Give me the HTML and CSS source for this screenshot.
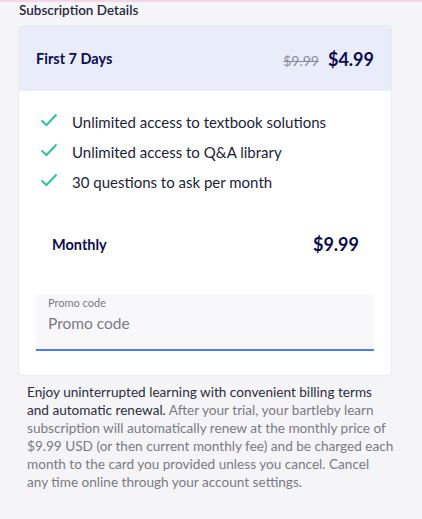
FILE: index.html
```html
<!DOCTYPE html>
<html>
<head>
<meta charset="utf-8">
<link rel="stylesheet" href="styles.css">
</head>
<body>
<div class="topbar"></div>
<main class="page">
  <h2 class="title">Subscription Details</h2>
  <section class="card">
    <div class="card-head">
      <span class="head-label">First 7 Days</span>
      <span class="prices"><s class="old">$9.99</s><span class="new">$4.99</span></span>
    </div>
    <div class="card-body">
      <ul class="features">
        <li><svg class="check" viewBox="0 0 18 14" width="18" height="14"><path d="M1.5 7.5 L6.5 12 L16.5 1.5" fill="none" stroke="#2ec4a0" stroke-width="2"/></svg>Unlimited access to textbook solutions</li>
        <li><svg class="check" viewBox="0 0 18 14" width="18" height="14"><path d="M1.5 7.5 L6.5 12 L16.5 1.5" fill="none" stroke="#2ec4a0" stroke-width="2"/></svg>Unlimited access to Q&amp;A library</li>
        <li><svg class="check" viewBox="0 0 18 14" width="18" height="14"><path d="M1.5 7.5 L6.5 12 L16.5 1.5" fill="none" stroke="#2ec4a0" stroke-width="2"/></svg>30 questions to ask per month</li>
      </ul>
      <div class="monthly">
        <span class="m-label">Monthly</span>
        <span class="m-price">$9.99</span>
      </div>
      <label class="promo">
        <span class="promo-label">Promo code</span>
        <span class="promo-input">Promo code</span>
      </label>
    </div>
  </section>
  <p class="terms"><span class="strong">Enjoy uninterrupted learning with convenient billing terms and automatic renewal.</span><span class="rest"> After your trial, your bartleby learn subscription will automatically renew at the monthly price of $9.99 USD (or then current monthly fee) and be charged each month to the card you provided unless you cancel. Cancel<br>any time online through your account settings.</span></p>
</main>
</body>
</html>
```
FILE: styles.css
```css
* { box-sizing: border-box; }
html, body { margin: 0; padding: 0; }
body {
  background: #f5f5f7;
  font-family: Lato, "Liberation Sans", sans-serif;
  color: #1d1d3a;
  width: 422px;
  height: 519px;
  overflow: hidden;
}
.topbar { height: 2px; background: #f4d6e8; }
.page { padding: 0 31px 0 19px; }
.title {
  margin: 0;
  font-size: 13.5px;
  font-weight: 600;
  line-height: 16px;
  color: #26263c;
}
.card {
  margin-top: 8px;
  background: #fff;
  border-radius: 4px;
  box-shadow: 0 0 0 1px #ebebef, 0 1px 2px rgba(0,0,0,0.05);
  overflow: hidden;
  width: 372px;
}
.card-head {
  height: 65px;
  background: #e9edfa;
  display: flex;
  align-items: center;
  justify-content: space-between;
  padding: 0 17px;
}
.head-label { font-weight: 700; font-size: 14.5px; color: #0c0c4e; }
.prices { display: flex; align-items: baseline; gap: 9px; }
.old { color: #8a8a94; font-size: 14px; }
.new { color: #0c0c4e; font-size: 18px; font-weight: 700; }
.card-body { padding: 16px 17px 24px 17px; }
.features { list-style: none; margin: 0; padding: 0 0 0 4px; }
.features li {
  display: flex;
  align-items: center;
  font-size: 15px;
  line-height: 30px;
  height: 30px;
  color: #1d1d3a;
}
.check { margin-right: 14px; margin-top: -4px; flex: none; }
.monthly {
  display: flex;
  justify-content: space-between;
  align-items: center;
  padding: 0 15px 0 16px;
  margin-top: 32px;
  height: 30px;
}
.m-label { font-weight: 700; font-size: 14.5px; color: #0c0c4e; }
.m-price { font-weight: 700; font-size: 18px; color: #0c0c4e; }
.promo {
  display: flex;
  flex-direction: column;
  margin-top: 35px;
  height: 57px;
  background: #f8f8fa;
  border-bottom: 2px solid #4c7cf0;
  padding: 2px 12px 0 12px;
}
.promo-label { font-size: 11px; color: #7a7a84; line-height: 14px; }
.promo-input { font-size: 15.5px; color: #7a7a84; line-height: 22px; margin-top: 2px; }
.terms {
  margin: 8px 0 0 8px;
  font-size: 13.6px;
  line-height: 18px;
  color: #7a7a84;
  width: 368px;
}
.terms .strong { color: #2d2d40; }
.terms .rest { color: #7a7a84; }
```
